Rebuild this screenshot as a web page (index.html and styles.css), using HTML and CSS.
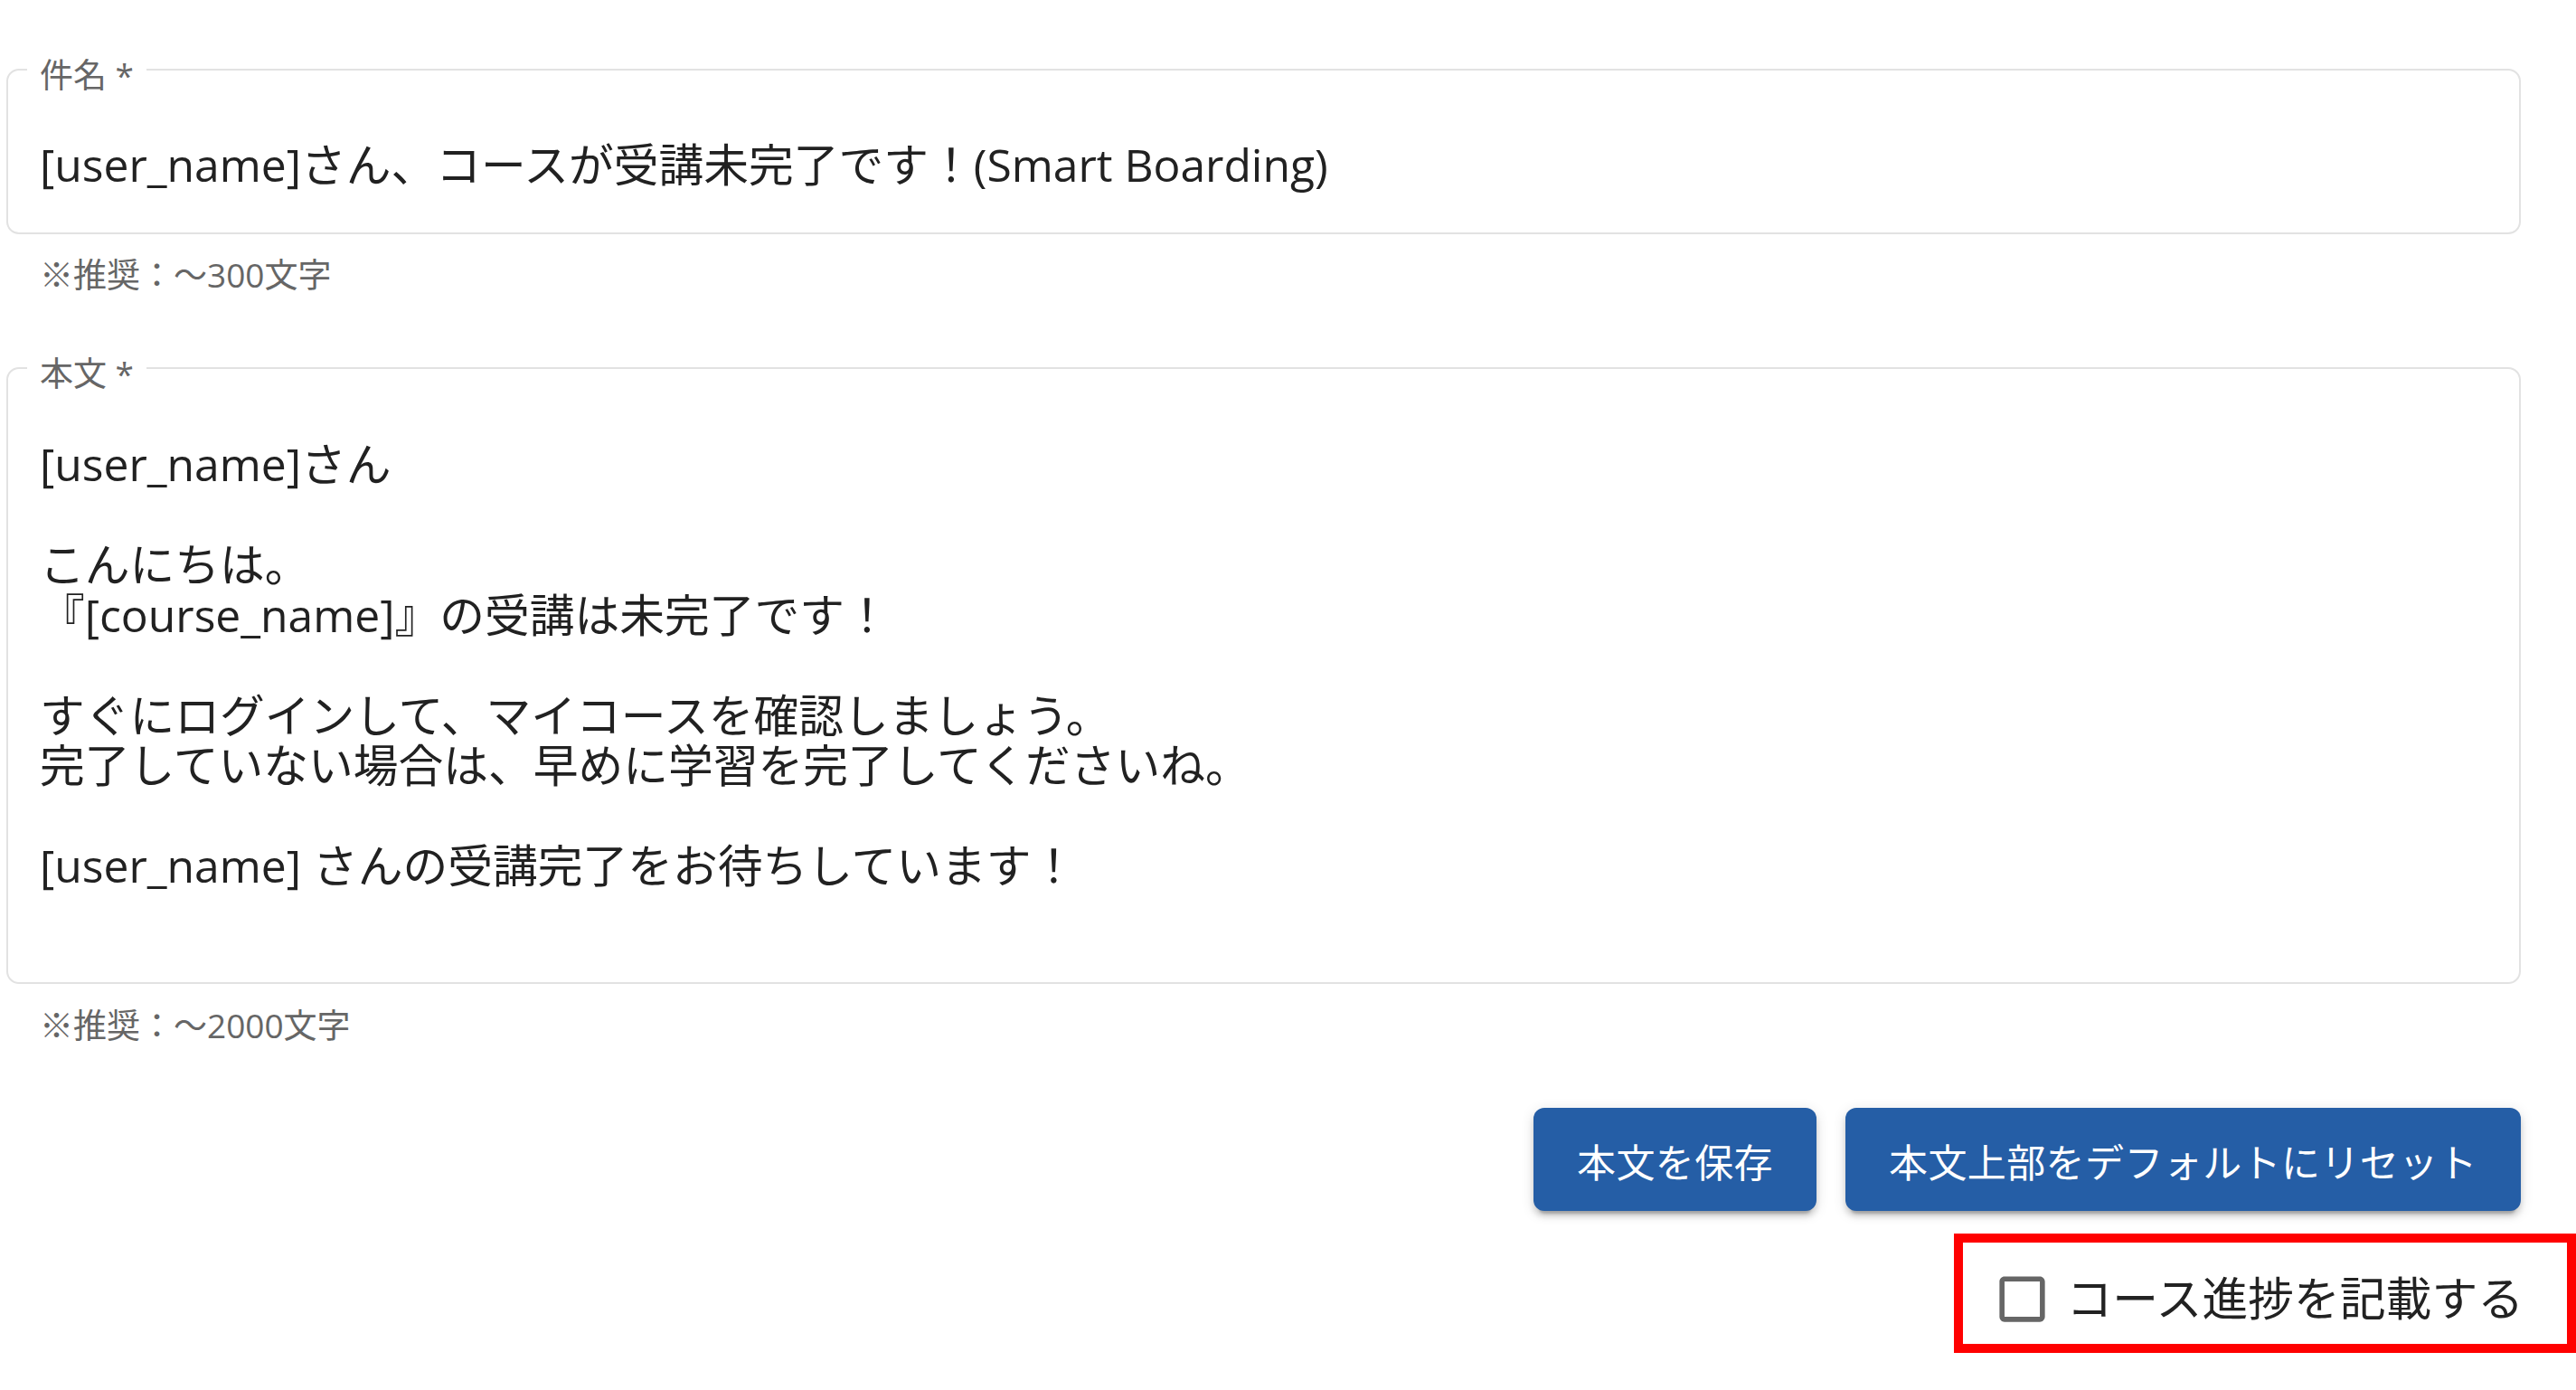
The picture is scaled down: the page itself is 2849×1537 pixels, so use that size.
FILE: index.html
```html
<!DOCTYPE html>
<html lang="ja">
<head>
<meta charset="utf-8">
<title>メール設定</title>
<link rel="stylesheet" href="styles.css">
</head>
<body>
<div class="page">
  <div class="form">
    <fieldset class="field field-subject">
      <legend class="field-label">件名 *</legend>
      <div class="field-text single">[user_name]さん、コースが受講未完了です！(Smart Boarding)</div>
    </fieldset>
    <p class="helper helper-subject">※推奨：～300文字</p>

    <fieldset class="field field-body">
      <legend class="field-label">本文 *</legend>
      <div class="field-text multi">[user_name]さん

こんにちは。
『[course_name]』の受講は未完了です！

すぐにログインして、マイコースを確認しましょう。
完了していない場合は、早めに学習を完了してくださいね。

[user_name] さんの受講完了をお待ちしています！</div>
    </fieldset>
    <p class="helper helper-body">※推奨：～2000文字</p>

    <div class="actions">
      <button class="btn" type="button">本文を保存</button>
      <button class="btn" type="button">本文上部をデフォルトにリセット</button>
    </div>
  </div>

  <div class="progress-row">
    <label class="progress-box">
      <svg class="checkbox" viewBox="0 0 24 24" width="67" height="67" aria-hidden="true">
        <path fill="#666666" d="M19 5v14H5V5h14m0-2H5c-1.11 0-2 .9-2 2v14c0 1.1.89 2 2 2h14c1.1 0 2-.9 2-2V5c0-1.1-.9-2-2-2z"/>
      </svg>
      <span class="progress-label">コース進捗を記載する</span>
    </label>
  </div>
</div>
</body>
</html>
```

FILE: styles.css
```css
html, body {
  margin: 0;
  padding: 0;
  background: #ffffff;
}

body {
  font-family: "Open Sans", "Noto Sans CJK JP", sans-serif;
  color: #212121;
  overflow: hidden;
}

.page {
  padding: 67px 0 0 7px;
}

.form {
  width: 2781px;
  display: flex;
  flex-direction: column;
}

.field {
  margin: 0;
  border: 2px solid #e2e2e2;
  border-radius: 14px;
  padding-left: 21px;
  padding-right: 21px;
  min-width: 0;
}

.field-label {
  padding: 12px 14px 0;
  font-size: 37px;
  line-height: 8px;
  color: #666666;
  white-space: nowrap;
}

.field-text {
  padding-left: 14px;
  font-size: 49.75px;
  line-height: 55.5px;
  color: #212121;
}

.field-subject {
  padding-top: 68px;
  padding-bottom: 46.5px;
}

.single {
  white-space: nowrap;
}

.field-body {
  margin-top: 73px;
  padding-top: 69px;
  padding-bottom: 100.5px;
}

.multi {
  white-space: pre-line;
}

.helper {
  margin: 25px 0 0;
  padding-left: 37px;
  font-size: 37px;
  line-height: 40px;
  color: #666666;
}

.helper-body {
  margin-top: 25.5px;
}

.actions {
  margin-top: 71.5px;
  display: flex;
  justify-content: flex-end;
  gap: 32px;
}

.btn {
  height: 114px;
  padding: 8px 48px 0;
  border: none;
  border-radius: 12px;
  background: #255ea6;
  color: #ffffff;
  font-family: "Open Sans", "Noto Sans CJK JP", sans-serif;
  font-size: 43px;
  letter-spacing: 0.4px;
  line-height: 50px;
  display: inline-flex;
  align-items: center;
  box-shadow: 0 9px 3px -6px rgba(0, 0, 0, 0.2), 0 6px 6px 0 rgba(0, 0, 0, 0.14), 0 3px 15px 0 rgba(0, 0, 0, 0.12);
}

.progress-row {
  margin-top: 25px;
  display: flex;
  justify-content: flex-end;
}

.progress-box {
  height: 100px;
  border: 10px solid #ff0000;
  padding: 12px 48px 0 32px;
  display: flex;
  align-items: center;
}

.checkbox {
  display: block;
  flex: none;
}

.progress-label {
  margin-left: 16px;
  font-size: 50.8px;
  line-height: 60px;
  color: #222222;
  white-space: nowrap;
}
```
